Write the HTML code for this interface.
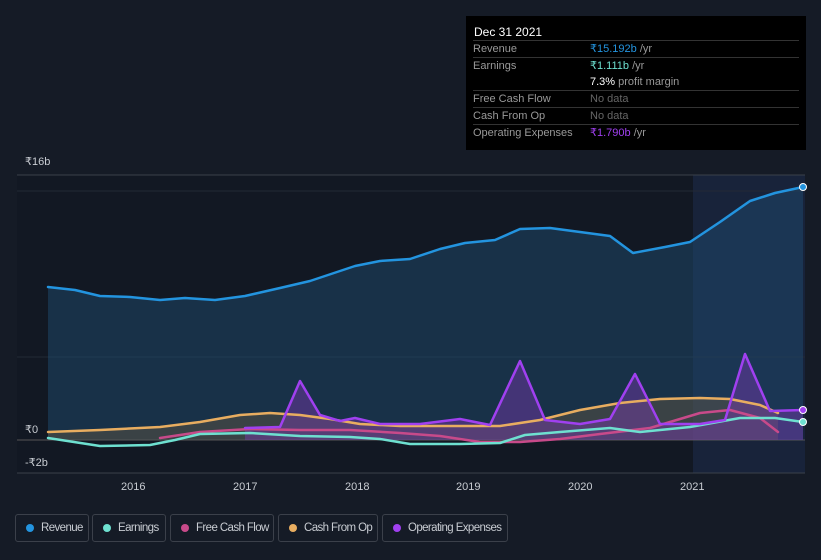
<!DOCTYPE html>
<html><head><meta charset="utf-8"><style>
body{margin:0;width:821px;height:560px;background:#151b26;font-family:"Liberation Sans",sans-serif;overflow:hidden;position:relative}
.tt{position:absolute;left:466px;top:16px;width:340px;height:134px;background:#000;color:#fff;font-size:11px}
.tt .h{position:absolute;left:8px;top:9px;font-size:12px}
.row{position:absolute;left:7px;width:326px;border-top:1px solid #333;height:16px;line-height:16px;color:#999}
.row span{position:absolute;left:117px;white-space:nowrap}
.lg{position:absolute;top:514px;height:28px;border:1px solid #3b404a;border-radius:3px;color:#c8ccd2;font-size:11.5px;letter-spacing:-0.6px;line-height:26px;box-sizing:border-box;white-space:nowrap}
.lg i{position:absolute;left:10px;top:9px;width:8px;height:8px;border-radius:50%}
.lg b{font-weight:normal;position:absolute;left:25px}
.ax{position:absolute;color:#c8ccd2;font-size:11px}
</style></head><body>
<svg width="821" height="560" style="position:absolute;left:0;top:0">
<rect x="17" y="175" width="788" height="298" fill="#121823"/>
<rect x="693" y="175" width="112" height="298" fill="#18233a"/>
<line x1="17" y1="175" x2="805" y2="175" stroke="#3a404a"/>
<line x1="17" y1="191" x2="805" y2="191" stroke="#232a36"/>
<line x1="17" y1="357" x2="805" y2="357" stroke="#232a36"/>
<line x1="17" y1="440" x2="805" y2="440" stroke="#555"/>
<line x1="17" y1="473" x2="805" y2="473" stroke="#3a404a"/>
<polygon fill="#1e4a6e" fill-opacity="0.5" points="48,440 48,287 75,290 100,296 130,297 160,300 185,298 215,300 245,296 280,288 310,281 355,266 380,261 410,259 440,249 465,243 495,240 520,229 550,228 580,232 610,236 633,253 665,247 690,242 720,222 750,201 775,193 803,187 803,440"/>
<polygon fill="#8a6a40" fill-opacity="0.3" points="48,440 48,432 100,430 160,427 200,422 240,415 270,413 300,415 330,419 360,424 400,426 450,426 500,426 540,420 580,410 620,403 660,399 700,398 730,399 760,405 778,413 778,440"/>
<polygon fill="#7a3ab0" fill-opacity="0.45" points="245,440 245,428 280,427 300,381 320,415 340,421 355,418 380,424 420,424 460,419 490,425 520,361 545,420 580,424 610,419 635,374 660,424 700,424 725,420 745,354 770,411 803,410 803,440"/>
<g fill="none" stroke-width="2.5" stroke-linejoin="round" stroke-linecap="round">
<polyline stroke="#2394df" points="48,287 75,290 100,296 130,297 160,300 185,298 215,300 245,296 280,288 310,281 355,266 380,261 410,259 440,249 465,243 495,240 520,229 550,228 580,232 610,236 633,253 665,247 690,242 720,222 750,201 775,193 803,187"/>
<polyline stroke="#e8ad60" points="48,432 100,430 160,427 200,422 240,415 270,413 300,415 330,419 360,424 400,426 450,426 500,426 540,420 580,410 620,403 660,399 700,398 730,399 760,405 778,413"/>
<polyline stroke="#c84a8a" points="160,438 200,432 250,429 300,430 350,430 400,433 440,436 480,442 520,442 560,439 600,434 650,428 700,413 730,410 760,418 778,432"/>
<polyline stroke="#6ee0d0" points="48,438 100,446 150,445 175,440 200,434 250,433 300,436 350,437 380,439 410,444 460,444 500,443 525,435 560,432 610,428 640,432 690,427 740,418 775,418 803,422"/>
<polyline stroke="#a040f0" points="245,428 280,427 300,381 320,415 340,421 355,418 380,424 420,424 460,419 490,425 520,361 545,420 580,424 610,419 635,374 660,424 700,424 725,420 745,354 770,411 803,410"/>
</g>
<circle cx="803" cy="187" r="3.5" fill="#2394df" stroke="#fff"/>
<circle cx="803" cy="422" r="3.5" fill="#6ee0d0" stroke="#fff"/>
<circle cx="803" cy="410" r="3.5" fill="#a040f0" stroke="#fff"/>
</svg>
<div class="ax" style="left:25px;top:155px">₹16b</div>
<div class="ax" style="left:25px;top:423px">₹0</div>
<div class="ax" style="left:25px;top:456px">-₹2b</div>
<div class="ax" style="left:121px;top:481px">2016</div>
<div class="ax" style="left:233px;top:481px">2017</div>
<div class="ax" style="left:345px;top:481px">2018</div>
<div class="ax" style="left:456px;top:481px">2019</div>
<div class="ax" style="left:568px;top:481px">2020</div>
<div class="ax" style="left:680px;top:481px">2021</div>
<div class="tt"><div class="h">Dec 31 2021</div>
<div class="row" style="top:24px">Revenue<span style="color:#2394df">₹15.192b <span style="position:static;color:#999">/yr</span></span></div>
<div class="row" style="top:41px">Earnings<span style="color:#6ee0d0">₹1.111b <span style="position:static;color:#999">/yr</span></span></div>
<div class="row" style="top:58px;border:none"><span style="color:#fff">7.3% <span style="position:static;color:#999">profit margin</span></span></div>
<div class="row" style="top:74px">Free Cash Flow<span style="color:#666">No data</span></div>
<div class="row" style="top:91px">Cash From Op<span style="color:#666">No data</span></div>
<div class="row" style="top:108px">Operating Expenses<span style="color:#a040f0">₹1.790b <span style="position:static;color:#999">/yr</span></span></div>
</div>
<div class="lg" style="left:15px;width:74px"><i style="background:#2394df"></i><b>Revenue</b></div>
<div class="lg" style="left:92px;width:74px"><i style="background:#6ee0d0"></i><b>Earnings</b></div>
<div class="lg" style="left:170px;width:104px"><i style="background:#c84a8a"></i><b>Free Cash Flow</b></div>
<div class="lg" style="left:278px;width:100px"><i style="background:#e8ad60"></i><b>Cash From Op</b></div>
<div class="lg" style="left:382px;width:126px"><i style="background:#a040f0"></i><b>Operating Expenses</b></div>
</body></html>
